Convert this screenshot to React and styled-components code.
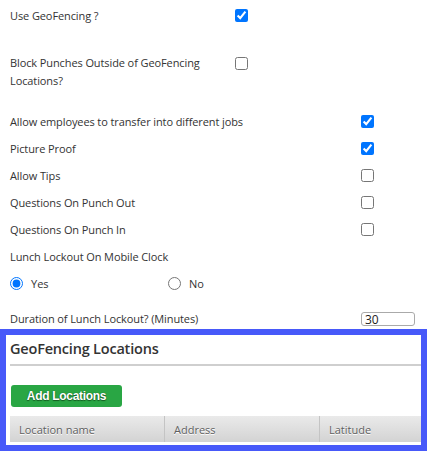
import React from 'react';
import styled, { createGlobalStyle } from 'styled-components';

const GlobalStyle = createGlobalStyle`
  html, body {
    margin: 0;
    padding: 0;
    background: #fff;
  }
  body {
    font-family: 'Open Sans', 'Noto Sans', sans-serif;
    font-size: 11px;
    color: #333;
  }
`;

const Page = styled.div`
  width: 427px;
  padding-top: 2px;
`;

const Settings = styled.div`
  display: flex;
  flex-direction: column;
  padding-left: 10px;
`;

const Row = styled.div`
  display: flex;
  align-items: ${(props) => (props.top ? 'flex-start' : 'center')};
  height: ${(props) => props.height || 27}px;
  margin-top: ${(props) => props.gap || 0}px;
`;

const Label = styled.div`
  width: ${(props) => props.width}px;
  flex-shrink: 0;
  line-height: 18px;
  letter-spacing: -0.1px;
`;

const Check = styled.input.attrs({ type: 'checkbox', readOnly: true })`
  margin: ${(props) => (props.top ? '3px 0 0 0' : '0')};
  width: 13px;
  height: 13px;
`;

const RadioOption = styled.label`
  display: flex;
  align-items: center;
  width: 158px;
  gap: 8px;
`;

const Radio = styled.input.attrs({ type: 'radio', readOnly: true })`
  margin: 0;
  width: 13px;
  height: 13px;
`;

const NumberBox = styled.input`
  box-sizing: border-box;
  width: 54px;
  height: 14px;
  margin: 0;
  padding: 0 3px;
  border: 1px solid #aaa;
  border-radius: 3px;
  font-family: 'Open Sans', sans-serif;
  font-size: 12px;
  color: #222;
  outline: none;
`;

const Section = styled.section`
  box-sizing: border-box;
  width: 427px;
  height: 122px;
  border: 6px solid #4759f9;
  padding: 0 0 0 4px;
  overflow: hidden;
`;

const SectionTitle = styled.h3`
  margin: 0;
  padding-top: 3px;
  height: 26px;
  font-size: 14.5px;
  font-weight: 600;
  color: #333;
  line-height: 22px;
  letter-spacing: -0.2px;
  border-bottom: 2px solid #cfcfcf;
`;

const AddButton = styled.button`
  display: block;
  margin: 19px 0 0 1px;
  width: 111px;
  height: 22px;
  border: none;
  border-radius: 3px;
  background: #29a644;
  color: #fff;
  font-family: 'Liberation Sans', Arial, sans-serif;
  font-weight: bold;
  font-size: 12px;
  letter-spacing: -0.3px;
  text-shadow: 0 0 1px #145a20, 0 1px 1px #145a20;
  padding: 0;
`;

const Table = styled.div`
  display: grid;
  grid-template-columns: 154px 155px 1fr;
  margin-top: 9px;
  height: 26px;
  background: linear-gradient(#eaeaea, #d3d3d3);
`;

const HeadCell = styled.div`
  display: flex;
  align-items: center;
  padding-left: 9px;
  font-size: 11px;
  color: #5f5f5f;
  text-shadow: 0 1px 0 #fff;
  border-left: ${(props) => (props.first ? 'none' : '1px solid #c4c4c4')};
`;

const checks = [
  { label: 'Allow employees to transfer into different jobs', checked: true },
  { label: 'Picture Proof', checked: true },
  { label: 'Allow Tips', checked: false },
  { label: 'Questions On Punch Out', checked: false },
  { label: 'Questions On Punch In', checked: false },
];

export default function App() {
  return (
    <Page>
      <GlobalStyle />
      <Settings>
        <Row>
          <Label width={225}>Use GeoFencing ?</Label>
          <Check checked />
        </Row>
        <Row height={36} gap={25} top>
          <Label width={225}>Block Punches Outside of GeoFencing Locations?</Label>
          <Check checked={false} top />
        </Row>
        {checks.map((c, i) => (
          <Row key={c.label} gap={i === 0 ? 18 : 0}>
            <Label width={351}>{c.label}</Label>
            <Check checked={c.checked} />
          </Row>
        ))}
        <Row>
          <Label width={351}>Lunch Lockout On Mobile Clock</Label>
        </Row>
        <Row>
          <RadioOption>
            <Radio name="lunch" checked /> Yes
          </RadioOption>
          <RadioOption>
            <Radio name="lunch" checked={false} /> No
          </RadioOption>
        </Row>
        <Row height={20} gap={12}>
          <Label width={351}>Duration of Lunch Lockout? (Minutes)</Label>
          <NumberBox defaultValue="30" />
        </Row>
      </Settings>
      <Section>
        <SectionTitle>GeoFencing Locations</SectionTitle>
        <AddButton>Add Locations</AddButton>
        <Table>
          <HeadCell first>Location name</HeadCell>
          <HeadCell>Address</HeadCell>
          <HeadCell>Latitude</HeadCell>
        </Table>
      </Section>
    </Page>
  );
}
